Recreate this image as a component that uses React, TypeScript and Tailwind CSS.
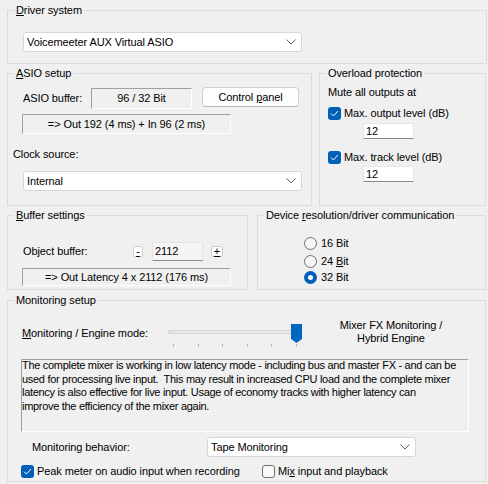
import type { ReactNode } from "react";

function Group({
  legend,
  className,
  children,
}: {
  legend: ReactNode;
  className: string;
  children?: ReactNode;
}) {
  return (
    <fieldset className={`border border-[#dcdcdc] ${className}`}>
      <legend className="ml-[6px] px-[2px] leading-[13px]">{legend}</legend>
      {children}
    </fieldset>
  );
}

function Chevron() {
  return (
    <svg width="10" height="6" viewBox="0 0 10 6" className="mr-[5px]">
      <polyline points="0.5,0.5 5,5 9.5,0.5" fill="none" stroke="#606060" strokeWidth="1" />
    </svg>
  );
}

function Dropdown({ value, className }: { value: string; className: string }) {
  return (
    <div
      className={`flex h-[20px] items-center justify-between rounded-[3px] border border-[#d6d6d6] bg-white pl-[3px] ${className}`}
    >
      <span>{value}</span>
      <Chevron />
    </div>
  );
}

function CheckBox({ checked }: { checked: boolean }) {
  if (!checked) {
    return (
      <span className="block h-[13px] w-[13px] shrink-0 rounded-[3px] border border-[#6e6e6e] bg-[#f9f9f9]" />
    );
  }
  return (
    <span className="flex h-[13px] w-[13px] shrink-0 items-center justify-center rounded-[3px] bg-[#005fb8]">
      <svg width="9" height="7" viewBox="0 0 9 7">
        <polyline points="1,3.6 3.4,6 8,1" fill="none" stroke="#fff" strokeWidth="1" />
      </svg>
    </span>
  );
}

function Radio({ checked, label }: { checked?: boolean; label: ReactNode }) {
  return (
    <div className="ml-[46px] flex h-[13px] items-center gap-[4px]">
      {checked ? (
        <span className="flex h-[13px] w-[13px] items-center justify-center rounded-full bg-[#005fb8]">
          <span className="block h-[5px] w-[5px] rounded-full bg-white" />
        </span>
      ) : (
        <span className="block h-[13px] w-[13px] rounded-full border border-[#6e6e6e] bg-[#f6f6f6]" />
      )}
      <span>{label}</span>
    </div>
  );
}

// sunken static field, dark on top/left and light on bottom/right
const sunken = "border border-t-[#a0a0a0] border-l-[#a0a0a0] border-b-white border-r-white";

export default function App() {
  return (
    <div className="h-[484px] w-[488px] overflow-hidden bg-[#f0f0f0] pl-[7px] pt-[4px] font-['Liberation_Sans',Arial,sans-serif] text-[11px] leading-[13px] tracking-[-0.1px] text-black">
      <Group
        className="h-[60px] w-[480px]"
        legend={
          <>
            <u>D</u>river system
          </>
        }
      >
        <Dropdown value="Voicemeeter AUX Virtual ASIO" className="ml-[15px] mt-[15px] w-[279px]" />
      </Group>

      <div className="mt-[3px] flex gap-[7px]">
        <Group
          className="h-[139px] w-[305px]"
          legend={
            <>
              <u>A</u>SIO setup
            </>
          }
        >
          <div className="ml-[15px] mt-[7px] flex items-start">
            <span className="mt-[5px] w-[68px]">ASIO buffer:</span>
            <div className={`mt-[1px] flex h-[21px] w-[101px] items-center justify-center ${sunken}`}>
              96 / 32 Bit
            </div>
            <button
              type="button"
              className="ml-[10px] h-[20px] w-[97px] rounded-[4px] border border-[#d0d0d0] border-b-[#b8b8b8] bg-[#fdfdfd] text-[11px]"
            >
              Control <u>p</u>anel
            </button>
          </div>
          <div className={`ml-[14px] mt-[5px] flex h-[20px] w-[209px] items-center justify-center ${sunken}`}>
            =&gt; Out 192 (4 ms) + In 96 (2 ms)
          </div>
          <p className="ml-[5px] mt-[14px]">Clock source:</p>
          <Dropdown value="Internal" className="ml-[15px] mt-[10px] w-[279px]" />
        </Group>

        <Group className="h-[139px] w-[167px]" legend="Overload protection">
          <p className="ml-[8px] mt-[6px]">Mute all outputs at</p>
          <div className="ml-[8px] mt-[8px] flex h-[13px] items-center gap-[3px]">
            <CheckBox checked />
            <span>Max. output level (dB)</span>
          </div>
          <div className="ml-[43px] mt-[3px] flex h-[16px] w-[51px] items-center border border-[#e5e5e5] border-b-[#8a8a8a] bg-white pl-[2px]">
            12
          </div>
          <div className="ml-[8px] mt-[12px] flex h-[13px] items-center gap-[3px]">
            <CheckBox checked />
            <span>Max. track level (dB)</span>
          </div>
          <div className="ml-[43px] mt-[2px] flex h-[16px] w-[51px] items-center border border-[#e5e5e5] border-b-[#8a8a8a] bg-white pl-[2px]">
            12
          </div>
        </Group>
      </div>

      <div className="mt-[3px] flex gap-[9px]">
        <Group
          className="h-[81px] w-[241px]"
          legend={
            <>
              <u>B</u>uffer settings
            </>
          }
        >
          <div className="ml-[15px] mt-[20px] flex h-[19px] items-center">
            <span className="w-[110px]">Object buffer:</span>
            <button
              type="button"
              className="flex h-[11px] w-[10px] items-center justify-center rounded-[2px] border border-[#d0d0d0] bg-[#fdfdfd] text-[11px] leading-none"
            >
              <u>-</u>
            </button>
            <div className="ml-[9px] flex h-[19px] w-[51px] items-center border border-[#e3e3e3] border-b-[#8a8a8a] bg-[#f5f5f5] pl-[2px]">
              2112
            </div>
            <button
              type="button"
              className="ml-[8px] flex h-[11px] w-[12px] items-center justify-center rounded-[2px] border border-[#d0d0d0] bg-[#fdfdfd] text-[11px] leading-none"
            >
              <u>+</u>
            </button>
          </div>
          <div className={`ml-[14px] mt-[7px] flex h-[18px] w-[209px] items-center justify-center ${sunken}`}>
            =&gt; Out Latency 4 x 2112 (176 ms)
          </div>
        </Group>

        <Group
          className="h-[81px] w-[229px]"
          legend={
            <>
              Device <u>r</u>esolution/driver communication
            </>
          }
        >
          <div className="mt-[15px]">
            <Radio label="16 Bit" />
          </div>
          <div className="mt-[5px]">
            <Radio
              label={
                <>
                  24 <u>B</u>it
                </>
              }
            />
          </div>
          <div className="mt-[3px]">
            <Radio checked label="32 Bit" />
          </div>
        </Group>
      </div>

      <Group className="mt-[4px] h-[188px] w-[479px]" legend="Monitoring setup">
        <div className="mt-[17px] flex h-[24px] items-start">
          <span className="ml-[14px] mt-[3px] w-[146px]">
            <u>M</u>onitoring / Engine mode:
          </span>
          <div className="relative h-[24px] w-[134px]">
            <div className="mt-[6px] h-[4px] w-[124px] border border-[#d6d6d6] bg-[#e7e7e7]" />
            <div className="ml-[5px] mt-[10px] flex w-[124px] justify-between">
              {[0, 1, 2, 3, 4, 5].map((i) => (
                <span key={i} className="block h-[3px] w-px bg-[#b4b4b4]" />
              ))}
            </div>
            <svg width="11" height="19" viewBox="0 0 11 19" className="absolute left-[123px] top-0">
              <path d="M0 0H11V15L5.5 19L0 15Z" fill="#0067c0" />
            </svg>
          </div>
          <div className="ml-[19px] -mt-[5px] w-[140px] text-center">
            Mixer FX Monitoring /
            <br />
            Hybrid Engine
          </div>
        </div>

        <div className={`ml-[13px] mt-[11px] h-[73px] w-[448px] overflow-hidden ${sunken}`}>
          <p className="-mt-[1px] whitespace-nowrap leading-[13.7px] tracking-[-0.3px]">
            The complete mixer is working in low latency mode - including bus and master FX - and can be
            <br />
            used for processing live input.&nbsp; This may result in increased CPU load and the complete mixer
            <br />
            latency is also effective for live input. Usage of economy tracks with higher latency can
            <br />
            improve the efficiency of the mixer again.
          </p>
        </div>

        <div className="mt-[5px] flex h-[20px] items-center">
          <span className="ml-[24px] w-[175px]">Monitoring behavior:</span>
          <Dropdown value="Tape Monitoring" className="w-[209px]" />
        </div>

        <div className="ml-[13px] mt-[8px] flex h-[13px] items-center">
          <div className="flex w-[241px] items-center gap-[3px]">
            <CheckBox checked />
            <span>Peak meter on audio input when recording</span>
          </div>
          <div className="flex items-center gap-[3px]">
            <CheckBox checked={false} />
            <span>
              Mi<u>x</u> input and playback
            </span>
          </div>
        </div>
      </Group>
    </div>
  );
}
